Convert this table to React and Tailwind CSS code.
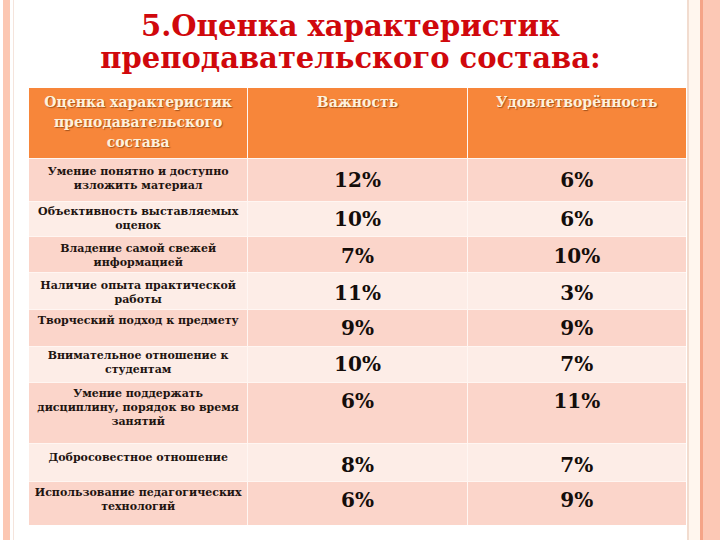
const rows = [
  { h: 'h-[42px]', bg: 'bg-[#fbd5ca]', tp: 'pt-[6px]', np: 'pt-[9px]', label: ['Умение понятно и доступно', 'изложить материал'], a: '12%', b: '6%' },
  { h: 'h-[34px]', bg: 'bg-[#fdede7]', tp: 'pt-[3px]', np: 'pt-[5px]', label: ['Объективность выставляемых', 'оценок'], a: '10%', b: '6%' },
  { h: 'h-[35px]', bg: 'bg-[#fbd5ca]', tp: 'pt-[5px]', np: 'pt-[7px]', label: ['Владение самой свежей', 'информацией'], a: '7%', b: '10%' },
  { h: 'h-[36px]', bg: 'bg-[#fdede7]', tp: 'pt-[6px]', np: 'pt-[8px]', label: ['Наличие опыта практической', 'работы'], a: '11%', b: '3%' },
  { h: 'h-[36px]', bg: 'bg-[#fbd5ca]', tp: 'pt-[4px]', np: 'pt-[6px]', label: ['Творческий подход к предмету'], a: '9%', b: '9%' },
  { h: 'h-[35px]', bg: 'bg-[#fdede7]', tp: 'pt-[2px]', np: 'pt-[5px]', label: ['Внимательное отношение к', 'студентам'], a: '10%', b: '7%' },
  { h: 'h-[60px]', bg: 'bg-[#fbd5ca]', tp: 'pt-[4px]', np: 'pt-[6px]', label: ['Умение поддержать', 'дисциплину, порядок во время', 'занятий'], a: '6%', b: '11%' },
  { h: 'h-[37px]', bg: 'bg-[#fdede7]', tp: 'pt-[7px]', np: 'pt-[9px]', label: ['Добросовестное отношение'], a: '8%', b: '7%' },
  { h: 'h-[43px]', bg: 'bg-[#fbd5ca]', tp: 'pt-[4px]', np: 'pt-[6px]', label: ['Использование педагогических', 'технологий'], a: '6%', b: '9%' },
]

const serif = '[font-family:DejaVu_Serif,serif]'
const head = `h-[70px] bg-[#f7863a] pt-[4px] text-center text-[14px] leading-[20px] font-bold text-[#fdf1dc] [text-shadow:1px_1px_1px_rgba(110,50,10,0.6)] ${serif}`

const App = () => {
  return (
    <div className="w-[720px] h-[540px] flex bg-white overflow-hidden">
      {/* left frame stripes */}
      <div className="w-[3px] bg-white" />
      <div className="w-[7px] bg-[#fcc7b2]" />
      <div className="w-[3px] bg-white" />
      <div className="w-px bg-[#f5e4dc]" />

      <div className="flex-1 flex flex-col">
        <h1 className="pt-[10px] text-center [font-family:DejaVu_Serif,serif] font-bold text-[29px] leading-[32px] text-[#d0080c] [text-shadow:0_0_2px_rgba(255,255,255,0.9)]">
          5.Оценка характеристик
          <br />
          преподавательского состава:
        </h1>

        <div className="mt-[14px] ml-[15px] w-[657px] grid grid-cols-3 gap-px bg-[#fff6f2]">
          <div className={head}>
            Оценка характеристик
            <br />
            преподавательского
            <br />
            состава
          </div>
          <div className={head}>Важность</div>
          <div className={head}>Удовлетворённость</div>

          {rows.map((r, i) => (
            <div key={i} className="contents">
              <div className={`${r.h} ${r.bg} ${r.tp} text-center text-[11px] leading-[14px] font-bold text-[#1e1410] ${serif}`}>
                {r.label.map((l, j) => (
                  <div key={j}>{l}</div>
                ))}
              </div>
              <div className={`${r.h} ${r.bg} ${r.np} text-center text-[20px] leading-[24px] font-bold text-[#140d0a] ${serif}`}>
                {r.a}
              </div>
              <div className={`${r.h} ${r.bg} ${r.np} text-center text-[20px] leading-[24px] font-bold text-[#140d0a] ${serif}`}>
                {r.b}
              </div>
            </div>
          ))}
        </div>
      </div>

      {/* right frame stripes */}
      <div className="w-[2px] bg-[#f2dccf]" />
      <div className="w-[11px] bg-[#fff6ee]" />
      <div className="w-[3px] bg-[#f5a487]" />
      <div className="w-[17px] bg-[#fcc8b5]" />
    </div>
  )
}

export default App
